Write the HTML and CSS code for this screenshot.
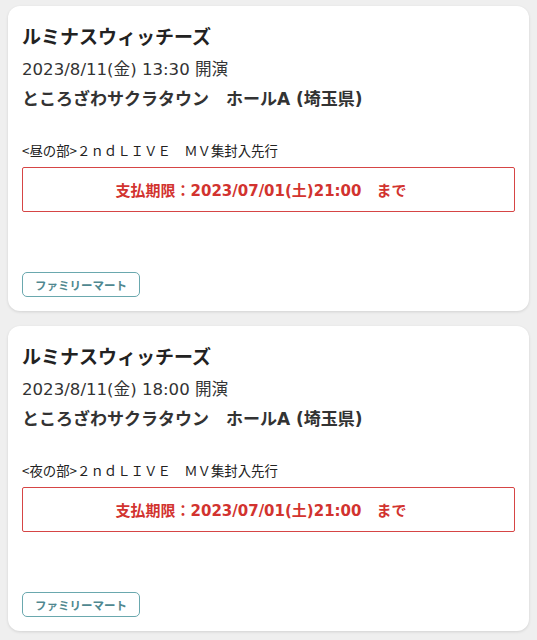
FILE: index.html
```html
<!DOCTYPE html>
<html lang="ja">
<head>
    <meta charset="UTF-8">
    <meta name="viewport" content="width=device-width, initial-scale=1.0">
    <title>チケット一覧</title>
    <link rel="stylesheet" href="styles.css">
</head>
<body>
    <div class="list">
        <div class="card">
            <div class="title">ルミナスウィッチーズ</div>
            <div class="date">2023/8/11(金) 13:30 開演</div>
            <div class="venue">ところざわサクラタウン　ホールA (埼玉県)</div>
            <div class="sub">&lt;昼の部&gt;２ｎｄＬＩＶＥ　ＭＶ集封入先行</div>
            <div class="limit">支払期限：2023/07/01(土)21:00　まで</div>
            <div class="badge">ファミリーマート</div>
        </div>
        <div class="card">
            <div class="title">ルミナスウィッチーズ</div>
            <div class="date">2023/8/11(金) 18:00 開演</div>
            <div class="venue">ところざわサクラタウン　ホールA (埼玉県)</div>
            <div class="sub">&lt;夜の部&gt;２ｎｄＬＩＶＥ　ＭＶ集封入先行</div>
            <div class="limit">支払期限：2023/07/01(土)21:00　まで</div>
            <div class="badge">ファミリーマート</div>
        </div>
    </div>
</body>
</html>
```

FILE: styles.css
```css
body {
    margin: 0;
    background: #efefef;
    font-family: "Noto Sans CJK JP", "Noto Sans", sans-serif;
    color: #333;
}
.list {
    display: flex;
    flex-direction: column;
    gap: 15px;
    padding: 6px 8px 10px;
}
.card {
    display: flex;
    flex-direction: column;
    align-items: flex-start;
    background: #fff;
    border-radius: 12px;
    box-shadow: 0 1px 3px rgba(0, 0, 0, 0.12);
    padding: 16px 14px 14px;
}
.title {
    font-size: 19px;
    font-weight: bold;
    line-height: 28px;
    color: #222;
}
.date {
    margin-top: 6px;
    font-family: "DejaVu Sans", "Noto Sans CJK JP", sans-serif;
    font-size: 16.6px;
    line-height: 28px;
}
.venue {
    margin-top: 1px;
    font-family: "DejaVu Sans", "Noto Sans CJK JP", sans-serif;
    font-size: 17px;
    font-weight: bold;
    line-height: 28px;
}
.sub {
    margin-top: 27px;
    font-size: 13.4px;
    line-height: 20px;
    color: #222;
}
.limit {
    align-self: stretch;
    margin-top: 7px;
    height: 43px;
    padding-right: 15px;
    display: flex;
    align-items: center;
    justify-content: center;
    border: 1.5px solid #d64545;
    border-radius: 2px;
    color: #d2332f;
    font-family: "DejaVu Sans", "Noto Sans CJK JP", sans-serif;
    font-size: 15px;
    font-weight: bold;
}
.badge {
    margin-top: 60px;
    height: 23px;
    padding: 0 12px;
    display: flex;
    align-items: center;
    border: 1.5px solid #6aa8ae;
    border-radius: 5px;
    color: #4f8890;
    font-size: 11.5px;
    font-weight: bold;
}
```
